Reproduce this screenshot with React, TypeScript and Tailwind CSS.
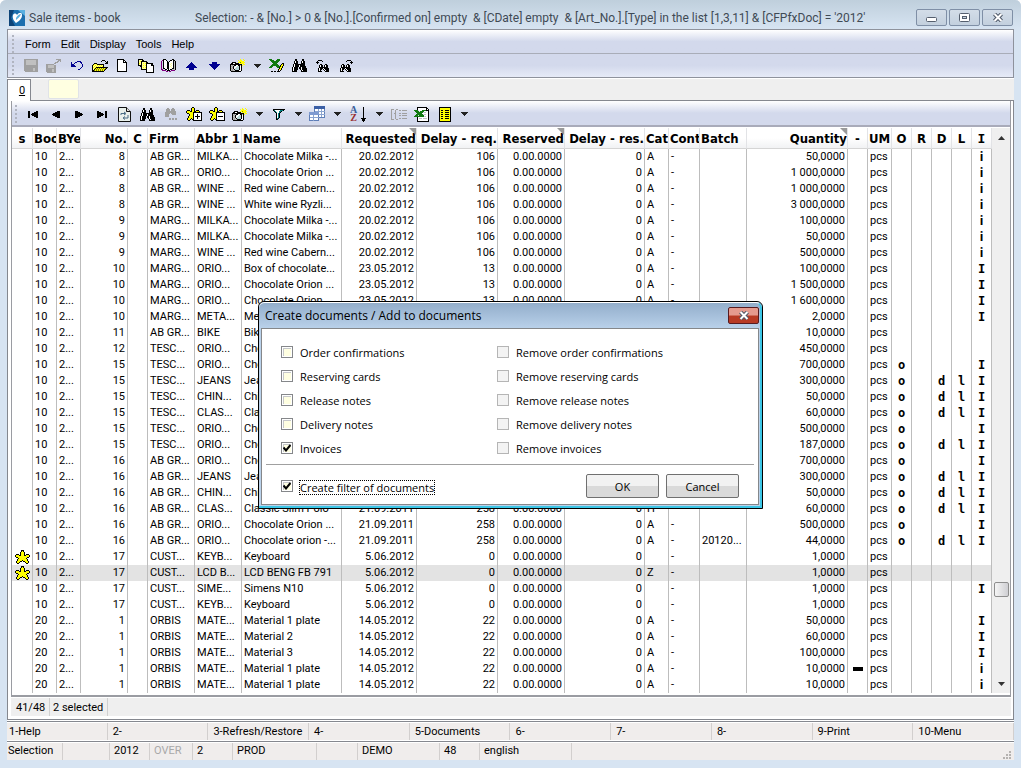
import { ReactNode, useState } from "react";

const uiFont = "font-['Roboto','Noto_Sans',sans-serif]";
const segoe = "font-['Open_Sans','Noto_Sans',sans-serif]";

const palette: Record<string, string> = {
  "#": "#000000",
  y: "#ffff00",
  w: "#ffffff",
  g: "#a0a0a0",
  b: "#000090",
  t: "#008080",
  c: "#b8d8d8",
  p: "#800080",
  e: "#107a10",
  o: "#808000",
  l: "#ffff99",
  s: "#c0c0c0",
};

function Pixels({ rows }: { rows: string[] }) {
  return (
    <svg
      width={rows[0].length}
      height={rows.length}
      viewBox={`0 0 ${rows[0].length} ${rows.length}`}
      shapeRendering="crispEdges"
      className="shrink-0"
      aria-hidden="true"
    >
      {rows.map((row, y) =>
        row.split("").map((ch, x) =>
          palette[ch] ? <rect key={`${x}-${y}`} x={x} y={y} width="1" height="1" fill={palette[ch]} /> : null
        )
      )}
    </svg>
  );
}

const star = [
  "......###......",
  "......#y#......",
  ".....#yyy#.....",
  ".....#yyy#.....",
  ".###.#yyy#.###.",
  "#yyy##yyy##yyy#",
  "#yyyyyyyyyyyyy#",
  ".##yyyyyyyyy##.",
  "...#yyyyyyy#...",
  "..#yyyyyyyyy#..",
  "..#yyyy#yyyy#..",
  ".#yyy##.##yyy#.",
  ".#yy#.....#yy#.",
  "..##.......##..",
];

const starPlus = [
  "......##........",
  ".....#yy#.......",
  ".....#yy#.......",
  ".###.#yy#.###...",
  "#yyy##yy##yyy#..",
  "#yyyyyy#########",
  ".##yyyy#wwwwwww#",
  "...#yyy#www#www#",
  "...#yyy#www#www#",
  "..#yyyy#w#####w#",
  "..#yyyy#www#www#",
  ".#yyy#y#www#www#",
  ".#yy#.##wwwwwww#",
  "..##...#########",
];

const starMinus = starPlus.map((row, i) =>
  i === 7 || i === 8 || i === 10 || i === 11 ? row.slice(0, 8) + "wwwwwww#" : row
);

const save = [
  "gggggggggggggg",
  "ggssssssssssgg",
  "ggssssssssssgg",
  "ggssssssssssgg",
  "ggssssssssssgg",
  "ggssssssssssgg",
  "gggggggggggggg",
  "gggggggggggggg",
  "gggggggggggggg",
  "gggggggggssggg",
  "gggggggggssggg",
  "gggggggggssggg",
  ".ggggggggggggg",
];

const saveAs = [
  "..........ggggg",
  "............ggg",
  "...........gg.g",
  ".........ggg...",
  "........gg.....",
  "gggggggg.......",
  "ggssssssgg.....",
  "ggssssssgg.....",
  "ggssssssgg.....",
  "gggggggggg.....",
  "ggggggssgg.....",
  "ggggggssgg.....",
  "ggggggssgg.....",
  ".ggggggggg.....",
];

const undo = [
  "......bbbb..",
  "b...bb...bb.",
  "b..b......b.",
  "bbb........b",
  "bbbb.......b",
  "bbbbb......b",
  "..........b.",
  ".........b..",
  ".......bb...",
];

const folder = [
  "..........###...",
  ".........#...#.#",
  "..............##",
  "..###........###",
  ".#yly#######....",
  "#ylylylylyl#....",
  "#lylylylyly#....",
  "#yly############",
  "#ly#yoyoyoyoyo#.",
  "#l#yoyoyoyoyo#..",
  "##oyoyoyoyoy#...",
  "############....",
];

const page = [
  "#######....",
  "#wwwww##...",
  "#wwwww#w#..",
  "#wwwww####.",
  "#wwwwwwww#.",
  "#wwwwwwww#.",
  "#wwwwwwww#.",
  "#wwwwwwww#.",
  "#wwwwwwww#.",
  "#wwwwwwww#.",
  "#wwwwwwww#.",
  "#wwwwwwww#.",
  "##########.",
];

const pages = [
  "#####..........",
  "#lll##.........",
  "#ly######......",
  "#ll#llll##.....",
  "#yl#lyly#######",
  "#ll#llll#wwww##",
  "####lyly#wwww###",
  "..##llll#wwwwww#",
  "...#lyly#wwwwww#",
  "...#llll#wwwwww#",
  "...######wwwwww#",
  "........#wwwwww#",
  "........#wwwwww#",
  "........########",
].map((row) => row.padEnd(16, "."));

const book = [
  "..###......##..",
  ".p#ww#...##w##.",
  "p.#www#.#www#s#",
  "p.#www##wwww#s#",
  "p.#www##wwlw#s#",
  "p.#www##wlww#s#",
  "p.#www##wwlw#s#",
  "p.#www##wlww#s#",
  "p.#www##wwlw#s#",
  "p.##ww##www##s#",
  "pp..##w#w##sss#",
  ".pppp.###.pppp.",
  ".....pp.pp.....",
];

const upArrow = [
  "......b......",
  ".....bbb.....",
  "....bbbbb....",
  "...bbbbbbb...",
  "..bbbbbbbbb..",
  ".bbbbbbbbbbb.",
  "....bbbbb....",
  "....bbbbb....",
];

const camera = [
  "..........y..y.",
  "........y.yy..y",
  ".........yyyyy.",
  "..####..yyoyyyy",
  ".##ww####.yyyy.",
  "############.yy",
  "#sgs##ww##s#y..",
  "#gs#cwwcc#w#...",
  "#sg#wwccc#w#...",
  "#gs#wcccc#w#...",
  "#sgs#cccc#w#...",
  "#ggss####ww#...",
  ".##########....",
];

const binoculars = [
  "...##.....##...",
  "...##.....##...",
  "..#w##...#w##..",
  "..#w##...#w##..",
  "..####...####..",
  ".#w##########..",
  ".#w####w#####..",
  ".#w####w######.",
  "#w####.##w####.",
  "#w####.##w#####",
  "#w####..#w#####",
  "#w###....#w####",
  "#####....######",
];

const binocularsGray = [
  "...gg...gg...",
  "..gggg.gggg..",
  "..gggg.gggg..",
  "..gggggggggg.",
  ".ggggggggggg.",
  ".ggggg.ggggg.",
  ".gggg...gggg.",
  ".gggg........",
  ".gggg........",
  ".............",
  ".....gg.gg.gg",
  ".....gg.gg.gg",
];

const binocularsBack = [
  "..####........",
  ".#....#.......",
  "###...........",
  ".#............",
  "....##...##...",
  "...#w##.#w##..",
  "...#w##.#w##..",
  "...#########..",
  "..#w###w#####.",
  "..#w##.#w####.",
  "..#w#...#w###.",
  "..####...####.",
];

const binocularsNext = [
  "........####..",
  ".......#....#.",
  "...........###",
  "............#.",
  "...##...##....",
  "..#w##.#w##...",
  "..#w##.#w##...",
  "..#########...",
  ".#w###w#####..",
  ".#w##.#w####..",
  ".#w#...#w###..",
  ".####...####..",
];

const excelEdit = [
  "eee.....eee....",
  ".eeee..eeee....",
  "..eeeeeeee.....",
  "...eeeeee......",
  "....eeee.....##",
  "...eeeeee...#y#",
  "..eeeeeeee.#yy#",
  ".eee...eeee#y#.",
  "eee.....ee#yy#.",
  "..........#y#..",
  ".........#yy#..",
  ".........#w#...",
  "..##.##.###....",
];

const excelSheet = [
  "...##########...",
  "...#wwwwwwww##..",
  "...#wwwwwwww#w#.",
  "eeee.wwweeee###.",
  ".eeee.eeeeww.w#.",
  "..eeeeeee.ssww#.",
  "...eeeeewwwwww#.",
  "..eeeeeee.ssww#.",
  ".eee.eeeeewwww#.",
  "eeeeeeeeee.sww#.",
  "...#wwwwwwwwww#.",
  "...#wssswssssw#.",
  "...#wwwwwwwwww#.",
  "...#wwwwwwwwww#.",
  "...############.",
];

const yellowList = [
  "############",
  "#yyyyyyyyyy#",
  "#yyyyyyyyyy#",
  "#y##yy####y#",
  "#yyyyyyyyyy#",
  "#y##yy####y#",
  "#yyyyyyyyyy#",
  "#y##yy####y#",
  "#yyyyyyyyyy#",
  "#y##yy####y#",
  "#yyyyyyyyyy#",
  "#y##yy####y#",
  "#yyyyyyyyyy#",
  "#yyyyyyyyyy#",
  "############",
];

const funnel = [
  "############",
  "#twwwwwttt#.",
  ".#twwwtt#...",
  "..#twwt#....",
  "...#wt#.....",
  "...#wt#.....",
  "...#wt#.....",
  "...#wt#.....",
  "...#wt#.....",
  "...#t#......",
  "...##.......",
];

const listBraces = [
  "ggg..gg.........",
  "g...g...gg.ggggg",
  "g...g...........",
  "g...g...........",
  "g..gg...gg.ggggg",
  "g...g...........",
  "g...g...gg.ggggg",
  "g...g...........",
  "g...g...........",
  "g...g...gg.ggggg",
  "ggg..gg.........",
];

const refresh = (
  <svg width="13" height="15" viewBox="0 0 13 15" aria-hidden="true">
    <path d="M.5.5h8l4 4v10H.5z" fill="#e9f0ec" stroke="#111" />
    <path d="M8.5.5v4h4" fill="#ddd" stroke="#111" />
    <path d="M3 8V6.500h4M6 5l2 1.500L6 8M10 8v3H6M7 9.500 5 11l2 1.500" fill="none" stroke="#4a6d86" />
  </svg>
);

const tableIcon = (
  <svg width="17" height="16" viewBox="0 0 17 16" shapeRendering="crispEdges" aria-hidden="true">
    <path d="M5.500.5h10v11h-10z" fill="#fff" stroke="#5f7fb8" />
    <path d="M5 0h11v3H5z" fill="#3b5fa5" />
    <path d="M5.500 5.500h10M5.500 8.500h10M9.500 3v8M12.500 3v8" stroke="#8aa4d0" />
    <path d="M.5 6.500h9v8h-9z" fill="#fff" stroke="#5f7fb8" />
    <path d="M0 6h10v3H0z" fill="#7f9bd0" />
    <path d="M.5 11.500h9M4.500 9v6" stroke="#8aa4d0" />
  </svg>
);

const sortIcon = (
  <span className="flex items-center gap-1" aria-hidden="true">
    <span className="flex flex-col font-['Liberation_Serif',serif] text-[10px] font-bold leading-2">
      <span className="text-[#3a5f9a]">A</span>
      <span className="text-[#9a3030]">Z</span>
    </span>
    <svg width="5" height="15" viewBox="0 0 5 15" shapeRendering="crispEdges">
      <path d="M2 0h1v15H2zM0 11h5v1H0zM1 12h3v2H1z" />
    </svg>
  </span>
);

const tri = (d: string) => (
  <svg width="10" height="9" viewBox="0 0 10 9" shapeRendering="crispEdges" aria-hidden="true">
    <path d={d} />
  </svg>
);

interface ToolItem {
  label: string;
  icon?: ReactNode;
  wide?: boolean;
}

const mainTools: ToolItem[] = [
  { label: "Save", icon: <Pixels rows={save} /> },
  { label: "Save as", icon: <Pixels rows={saveAs} /> },
  { label: "Undo", icon: <Pixels rows={undo} /> },
  { label: "Open", icon: <Pixels rows={folder} /> },
  { label: "New", icon: <Pixels rows={page} /> },
  { label: "Copy", icon: <Pixels rows={pages} /> },
  { label: "Book", icon: <Pixels rows={book} /> },
  { label: "Previous record", icon: <Pixels rows={upArrow} /> },
  { label: "Next record", icon: <Pixels rows={[...upArrow].reverse()} /> },
  { label: "Snapshot", icon: <Pixels rows={camera} /> },
  { label: "Snapshot options" },
  { label: "Edit in Excel", icon: <Pixels rows={excelEdit} /> },
  { label: "Find", icon: <Pixels rows={binoculars} /> },
  { label: "Find previous", icon: <Pixels rows={binocularsBack} /> },
  { label: "Find next", icon: <Pixels rows={binocularsNext} /> },
];

const gridTools: ToolItem[] = [
  { label: "First", icon: tri("M0 1h2v7H0zM3 4h1v1H3zM4 3h2v3H4zM6 2h2v5H6zM8 1h2v7H8z") },
  { label: "Previous", icon: tri("M1 4h1v1H1zM2 3h2v3H2zM4 2h2v5H4zM6 1h3v7H6z") },
  { label: "Next", icon: tri("M8 4h1v1H8zM6 3h2v3H6zM4 2h2v5H4zM1 1h3v7H1z") },
  { label: "Last", icon: tri("M8 1h2v7H8zM6 4h1v1H6zM4 3h2v3H4zM2 2h2v5H2zM0 1h2v7H0z") },
  { label: "Refresh", icon: refresh },
  { label: "Find", icon: <Pixels rows={binoculars} /> },
  { label: "Find more", icon: <Pixels rows={binocularsGray} /> },
  { label: "Select", icon: <Pixels rows={starPlus} /> },
  { label: "Deselect", icon: <Pixels rows={starMinus} /> },
  { label: "Snapshot", icon: <Pixels rows={camera} /> },
  { label: "Snapshot options" },
  { label: "Filter", icon: <Pixels rows={funnel} /> },
  { label: "Filter options" },
  { label: "Columns", icon: tableIcon },
  { label: "Column options" },
  { label: "Sort", icon: sortIcon, wide: true },
  { label: "Sort options" },
  { label: "Group", icon: <Pixels rows={listBraces} /> },
  { label: "Export to Excel", icon: <Pixels rows={excelSheet} /> },
  { label: "Report", icon: <Pixels rows={yellowList} /> },
  { label: "Report options" },
];

function Grip() {
  return (
    <svg width="3" height="18" viewBox="0 0 3 18" shapeRendering="crispEdges" className="shrink-0" aria-hidden="true">
      {[0, 4, 8, 12, 16].map((y) => (
        <rect key={y} x="0" y={y} width="2" height="2" fill="#b0b4c0" />
      ))}
    </svg>
  );
}

function ToolBar({ items }: { items: ToolItem[] }) {
  return (
    <>
      {items.map((item) => (
        <button
          key={item.label}
          type="button"
          aria-label={item.label}
          className={`flex h-full shrink-0 items-center justify-center ${
            item.icon ? (item.wide ? "w-[26px]" : "w-[23px]") : "w-4"
          }`}
        >
          {item.icon || (
            <svg width="7" height="4" viewBox="0 0 7 4" shapeRendering="crispEdges" aria-hidden="true">
              <path d="M0 0h7v1H0zM1 1h5v1H1zM2 2h3v1H2zM3 3h1v1H3z" fill="#222" />
            </svg>
          )}
        </button>
      ))}
    </>
  );
}

interface Column {
  title: string;
  width: number;
  align?: "right" | "center";
  marker?: boolean;
  mono?: boolean;
}

const columns: Column[] = [
  { title: "s", width: 21, align: "center" },
  { title: "Book", width: 24 },
  { title: "BYear", width: 24 },
  { title: "No.", width: 47, align: "right" },
  { title: "C", width: 20, align: "center" },
  { title: "Firm", width: 47 },
  { title: "Abbr 1", width: 47 },
  { title: "Name", width: 100 },
  { title: "Requested", width: 75, align: "right", marker: true },
  { title: "Delay - req.", width: 81, align: "right" },
  { title: "Reserved", width: 67, align: "right", marker: true },
  { title: "Delay - res.", width: 80, align: "right" },
  { title: "Cat", width: 24 },
  { title: "Cont", width: 31 },
  { title: "Batch", width: 47 },
  { title: "Quantity", width: 101, align: "right", marker: true },
  { title: "-", width: 20, align: "center" },
  { title: "UM", width: 24 },
  { title: "O", width: 20, align: "center", mono: true },
  { title: "R", width: 20, align: "center", mono: true },
  { title: "D", width: 20, align: "center", mono: true },
  { title: "L", width: 20, align: "center", mono: true },
  { title: "I", width: 20, align: "center", mono: true },
];

// book, no, firm, abbr, name, requested, delay, cat, batch, quantity, flags (o, d, l, i)
type Item = [string, string, string, string, string, string, string, string, string, string, string];

const items: Item[] = [
  ["10", "8", "AB GR...", "MILKA...", "Chocolate Milka -...", "20.02.2012", "106", "A", "", "50,0000", "i"],
  ["10", "8", "AB GR...", "ORIO...", "Chocolate Orion ...", "20.02.2012", "106", "A", "", "1 000,0000", "i"],
  ["10", "8", "AB GR...", "WINE ...", "Red wine Cabern...", "20.02.2012", "106", "A", "", "1 000,0000", "i"],
  ["10", "8", "AB GR...", "WINE ...", "White wine Ryzli...", "20.02.2012", "106", "A", "", "3 000,0000", "i"],
  ["10", "9", "MARG...", "MILKA...", "Chocolate Milka -...", "20.02.2012", "106", "A", "", "100,0000", "i"],
  ["10", "9", "MARG...", "MILKA...", "Chocolate Milka -...", "20.02.2012", "106", "A", "", "50,0000", "i"],
  ["10", "9", "MARG...", "WINE ...", "Red wine Cabern...", "20.02.2012", "106", "A", "", "500,0000", "i"],
  ["10", "10", "MARG...", "ORIO...", "Box of chocolate...", "23.05.2012", "13", "A", "", "100,0000", "I"],
  ["10", "10", "MARG...", "ORIO...", "Chocolate Orion ...", "23.05.2012", "13", "A", "", "1 500,0000", "I"],
  ["10", "10", "MARG...", "ORIO...", "Chocolate Orion", "23.05.2012", "13", "A", "", "1 600,0000", "I"],
  ["10", "10", "MARG...", "META...", "Metal", "23.05.2012", "13", "A", "", "2,0000", "I"],
  ["10", "11", "AB GR...", "BIKE", "Bike", "23.05.2012", "13", "A", "", "10,0000", ""],
  ["10", "12", "TESC...", "ORIO...", "Chocolate Orion ...", "23.05.2012", "13", "A", "", "450,0000", ""],
  ["10", "15", "TESC...", "ORIO...", "Chocolate Orion ...", "21.09.2011", "258", "A", "", "700,0000", "oI"],
  ["10", "15", "TESC...", "JEANS", "Jeans", "21.09.2011", "258", "A", "", "300,0000", "odlI"],
  ["10", "15", "TESC...", "CHIN...", "Chinos", "21.09.2011", "258", "A", "", "50,0000", "odlI"],
  ["10", "15", "TESC...", "CLAS...", "Classic Slim Polo", "21.09.2011", "258", "A", "", "60,0000", "odlI"],
  ["10", "15", "TESC...", "ORIO...", "Chocolate Orion ...", "21.09.2011", "258", "A", "", "500,0000", "oI"],
  ["10", "15", "TESC...", "ORIO...", "Chocolate Orion ...", "21.09.2011", "258", "A", "", "187,0000", "odlI"],
  ["10", "16", "AB GR...", "ORIO...", "Chocolate Orion ...", "21.09.2011", "258", "A", "", "700,0000", "oI"],
  ["10", "16", "AB GR...", "JEANS", "Jeans", "21.09.2011", "258", "A", "", "300,0000", "odlI"],
  ["10", "16", "AB GR...", "CHIN...", "Chinos", "21.09.2011", "258", "A", "", "50,0000", "odlI"],
  ["10", "16", "AB GR...", "CLAS...", "Classic Slim Polo", "21.09.2011", "258", "H", "", "60,0000", "odlI"],
  ["10", "16", "AB GR...", "ORIO...", "Chocolate Orion ...", "21.09.2011", "258", "A", "", "500,0000", "oI"],
  ["10", "16", "AB GR...", "ORIO...", "Chocolate orion -...", "21.09.2011", "258", "A", "20120...", "44,0000", "odlI"],
  ["10", "17", "CUST...", "KEYB...", "Keyboard", "5.06.2012", "0", "", "", "1,0000", "*"],
  ["10", "17", "CUST...", "LCD B...", "LCD BENG FB 791", "5.06.2012", "0", "Z", "", "1,0000", "*"],
  ["10", "17", "CUST...", "SIME...", "Simens N10", "5.06.2012", "0", "", "", "1,0000", "I"],
  ["10", "17", "CUST...", "KEYB...", "Keyboard", "5.06.2012", "0", "", "", "1,0000", ""],
  ["20", "1", "ORBIS", "MATE...", "Material 1 plate", "14.05.2012", "22", "A", "", "50,0000", "I"],
  ["20", "1", "ORBIS", "MATE...", "Material 2", "14.05.2012", "22", "A", "", "60,0000", "I"],
  ["20", "1", "ORBIS", "MATE...", "Material 3", "14.05.2012", "22", "A", "", "100,0000", "I"],
  ["20", "1", "ORBIS", "MATE...", "Material 1 plate", "14.05.2012", "22", "A", "", "10,0000", "-i"],
  ["20", "1", "ORBIS", "MATE...", "Material 1 plate", "14.05.2012", "22", "A", "", "10,0000", "i"],
];

const currentRow = 26;

function rowCells(item: Item): ReactNode[] {
  const [book, no, firm, abbr, name, requested, delay, cat, batch, quantity, flags] = item;
  const flag = (f: string) => (flags.includes(f) ? f : "");
  return [
    flags.includes("*") ? <Pixels rows={star} /> : "",
    book,
    "2...",
    no,
    "",
    firm,
    abbr,
    name,
    requested,
    delay,
    "0.00.0000",
    "0",
    cat,
    "-",
    batch,
    quantity,
    flags.includes("-") ? <span className="block h-1 w-2.5 bg-black" /> : "",
    "pcs",
    flag("o"),
    "",
    flag("d"),
    flag("l"),
    flags.includes("i") ? <span className="font-['Noto_Sans',sans-serif]">i</span> : flag("I"),
  ];
}

function ItemTable() {
  return (
    <table className="w-full table-fixed border-separate border-spacing-0">
      <colgroup>
        {columns.map((col, i) => (
          <col key={i} style={{ width: col.width }} />
        ))}
      </colgroup>
      <thead>
        <tr>
          {columns.map((col, i) => (
            <th
              key={i}
              className="border-b border-r border-b-[#d5d5d5] border-r-[#e2e3e6] bg-linear-to-b from-white from-50% to-[#f1f2f4] p-0"
            >
              <div
                className={`relative flex h-5 items-center overflow-hidden whitespace-nowrap pt-px font-['DejaVu_Sans_Condensed','DejaVu_Sans',sans-serif] text-[13px] leading-4 ${
                  col.align === "right" ? "justify-end" : col.align === "center" ? "justify-center" : "pl-px"
                }`}
              >
                {col.title === "I" ? <span className="font-['DejaVu_Sans_Mono',monospace]">I</span> : col.title}
                {col.marker && (
                  <svg width="7" height="7" viewBox="0 0 7 7" className="absolute right-0 top-0" aria-hidden="true">
                    <path d="M0 0h7v7z" fill="#9a9a9a" />
                  </svg>
                )}
              </div>
            </th>
          ))}
        </tr>
      </thead>
      <tbody>
        {items.map((item, r) => (
          <tr key={r} className={r === currentRow ? "bg-[#e3e3e3]" : ""}>
            {rowCells(item).map((cell, c) => {
              const col = columns[c];
              return (
                <td key={c} className="border-r border-[#bdbdbd] p-0">
                  <div
                    className={`flex h-4 items-center overflow-hidden whitespace-nowrap leading-4 ${
                      col.align === "right" ? "justify-end pr-0.5" : col.align === "center" ? "justify-center" : "pl-0.5"
                    } ${col.mono ? "font-['DejaVu_Sans_Mono',monospace] text-[12px] font-bold" : ""}`}
                  >
                    {cell}
                  </div>
                </td>
              );
            })}
          </tr>
        ))}
      </tbody>
    </table>
  );
}

function ScrollBar() {
  return (
    <div className="flex w-[18px] shrink-0 flex-col items-center bg-[#efefef]">
      <button type="button" aria-label="Scroll up" className="flex h-[19px] w-full items-center justify-center">
        <svg width="7" height="4" viewBox="0 0 7 4" aria-hidden="true">
          <path d="M3.500 0 7 4H0z" fill="#333" />
        </svg>
      </button>
      <div className="grow-[436]" />
      <button
        type="button"
        aria-label="Scroll position"
        className="h-[15px] w-[15px] rounded-xs border border-[#8e8e8e] bg-linear-to-r from-[#f5f5f5] to-[#cfcfd3]"
      />
      <div className="grow-[78]" />
      <button type="button" aria-label="Scroll down" className="flex h-[18px] w-full items-center justify-center">
        <svg width="7" height="4" viewBox="0 0 7 4" aria-hidden="true">
          <path d="M0 0h7L3.500 4z" fill="#333" />
        </svg>
      </button>
    </div>
  );
}

interface CheckRowProps {
  label: string;
  checked?: boolean;
  disabled?: boolean;
  focused?: boolean;
}

function CheckRow({ label, checked, disabled, focused }: CheckRowProps) {
  const [on, setOn] = useState(!!checked);
  return (
    <label className="flex h-6 items-center gap-[7px]">
      <span className="relative h-3 w-3 shrink-0">
        <input
          type="checkbox"
          checked={on}
          disabled={disabled}
          onChange={() => setOn(!on)}
          className={`block h-3 w-3 appearance-none border ${
            disabled
              ? "border-[#b5b5b5] bg-[#f3f3f3]"
              : "border-[#85878a] bg-[#ffffe1] shadow-[inset_0_0_0_1px_#ffffff,inset_2px_2px_0_0_#c5c7ca]"
          }`}
        />
        {on && (
          <svg width="8" height="8" viewBox="0 0 8 8" className="pointer-events-none absolute left-0.5 top-0.5" aria-hidden="true">
            <path d="M.5 3.500 3 6.500 7.500 1" fill="none" stroke="#000" strokeWidth="2" />
          </svg>
        )}
      </span>
      <span className="pt-0.5">
        <span className={focused ? "block leading-[13px] outline-1 outline-dotted outline-black" : "block leading-4"}>{label}</span>
      </span>
    </label>
  );
}

const dialogButton =
  "h-6 w-[73px] rounded-xs border border-[#707070] bg-linear-to-b from-[#f2f2f2] from-50% to-[#dadada] to-50% pt-px text-center";

function DocumentsDialog() {
  return (
    <div
      role="dialog"
      aria-label="Create documents / Add to documents"
      className={`absolute inset-x-0 top-[301px] mx-auto w-[505px] rounded-t-md border border-black bg-[#b9d1ea] text-[11px] ${segoe}`}
    >
      <div className="rounded-t-md border-b-2 border-r-2 border-t border-[#3cc6e6] border-t-white bg-linear-to-b from-[#93aecb] to-[#bad2eb] to-[26px] pb-px pl-0.5 pr-px">
        <div className="flex h-[25px] items-center justify-between pl-1">
          <span>
            <span className="text-[12px]">Create documents / Add to documents</span>
          </span>
          <button
            type="button"
            aria-label="Close"
            className="flex h-[17px] w-[31px] items-center justify-center rounded-xs border border-[#571b20] bg-linear-to-b from-[#e59a8e] from-45% to-[#b83a24] to-55%"
          >
            <CloseGlyph />
          </button>
        </div>
        <div className="border border-[#85878a] bg-white">
          <div className="grid grid-cols-[216px_1fr] px-[19px] pb-1 pt-[11px]">
            <div>
              <CheckRow label="Order confirmations" />
              <CheckRow label="Reserving cards" />
              <CheckRow label="Release notes" />
              <CheckRow label="Delivery notes" />
              <CheckRow label="Invoices" checked />
            </div>
            <div>
              <CheckRow label="Remove order confirmations" disabled />
              <CheckRow label="Remove reserving cards" disabled />
              <CheckRow label="Remove release notes" disabled />
              <CheckRow label="Remove delivery notes" disabled />
              <CheckRow label="Remove invoices" disabled />
            </div>
          </div>
          <div className="mx-1 border-t border-[#a0a0a0]" />
          <div className="flex items-center justify-between px-[19px] pb-1.5 pt-[9px]">
            <CheckRow label="Create filter of documents" checked focused />
            <div className="flex gap-[7px]">
              <button type="button" className={dialogButton}>OK</button>
              <button type="button" className={dialogButton}>Cancel</button>
            </div>
          </div>
        </div>
      </div>
    </div>
  );
}

function CloseGlyph() {
  return (
    <svg width="12" height="9" viewBox="0 0 12 9" aria-hidden="true">
      <path d="M2.500 1 9.500 8M9.500 1 2.500 8" stroke="#4d5766" strokeWidth="4" />
      <path d="M2.500 1 9.500 8M9.500 1 2.500 8" stroke="#fff" strokeWidth="2" />
    </svg>
  );
}

const captionButton =
  "flex h-[17px] w-[31px] items-center justify-center rounded-xs border border-[#7f8fa6] bg-linear-to-b from-[#d3dde8] to-[#c3d0de]";

function TitleBar() {
  return (
    <header className={`flex h-[29px] items-center bg-linear-to-b from-[#bfcfdc] to-[#d7e4f2] pl-[9px] pr-[8px] pt-1.5 text-[12px] text-[#3f4a55] ${uiFont}`}>
      <svg width="16" height="16" viewBox="0 0 16 16" className="shrink-0" aria-hidden="true">
        <rect width="16" height="16" fill="#1c6fae" />
        <path d="M0 0h5l-3 8 4 8H0z" fill="#0d4478" />
        <path d="M9 0h7v6z" fill="#59b0e0" />
        <path d="M4 5c1-2 3-2 4 0 2-3 5-3 5 0 0 4-3 6-6 8C5 11 3 8 4 5z" fill="#fff" />
        <path d="M7 8c1-2 3-4 5-4-1 3-3 4-5 6z" fill="#5fb2e0" />
      </svg>
      <span className="w-[170px] shrink-0 pl-1">Sale items - book</span>
      <span className="grow whitespace-pre">
        {"Selection: - & [No.] > 0 & [No.].[Confirmed on] empty  & [CDate] empty  & [Art_No.].[Type] in the list [1,3,11] & [CFPfxDoc] = '2012'"}
      </span>
      <span className="flex gap-0.5">
        <button type="button" aria-label="Minimize" className={captionButton}>
          <svg width="11" height="9" viewBox="0 0 11 9" aria-hidden="true">
            <rect x=".5" y="4.500" width="10" height="4" rx="1" fill="#fff" stroke="#555f6e" />
          </svg>
        </button>
        <button type="button" aria-label="Restore" className={captionButton}>
          <svg width="11" height="9" viewBox="0 0 11 9" aria-hidden="true">
            <rect x=".5" y=".5" width="10" height="8" rx="1" fill="#fff" stroke="#555f6e" />
            <rect x="3.500" y="3.500" width="4" height="2" fill="#c8d4e0" stroke="#555f6e" />
          </svg>
        </button>
        <button type="button" aria-label="Close window" className={captionButton}>
          <CloseGlyph />
        </button>
      </span>
    </header>
  );
}

const functionKeys = ["1-Help", "2-", "3-Refresh/Restore", "4-", "5-Documents", "6-", "7-", "8-", "9-Print", "10-Menu"];

export default function App() {
  return (
    <div className={`relative overflow-hidden rounded-t-md border-b border-[#4a4a4a] bg-[#d7e4f2] text-[11px] leading-4 text-black ${uiFont}`}>
      <TitleBar />
      <main className="mx-[7px] mb-2 bg-white">
        <div className="border border-[#8e929c]">
          <nav className="flex h-6 items-center border-b border-[#a9adb8] bg-linear-to-b from-white to-[#d3d9ec] to-50% pl-1 pt-1 font-['Liberation_Sans',Arial,sans-serif] text-[11px]">
            <Grip />
            <div className="flex gap-2.5 pl-2.5">
              {["Form", "Edit", "Display", "Tools", "Help"].map((menu) => (
                <button key={menu} type="button">{menu}</button>
              ))}
            </div>
          </nav>
          <div className="flex h-[23px] items-center bg-linear-to-b from-[#d3d9ec] from-50% to-[#e6eaf7] pl-1">
            <Grip />
            <div className="flex h-full pl-1">
              <ToolBar items={mainTools} />
            </div>
          </div>
        </div>

        <div className="mt-px flex h-[22px] border-b border-l border-b-[#85888f] border-l-[#85888f] bg-[#efefef]">
          <button type="button" className="-mb-px h-[22px] w-[23px] border-r border-t border-[#85888f] bg-white pl-1.5 underline">
            0
          </button>
          <input aria-label="Quick search" className="ml-[17px] h-5 w-[31px] rounded-xs border border-[#e0e3e8] bg-[#ffffe1]" />
        </div>

        <div className="border-x border-b border-[#85888f] pb-[3px] pl-[3px] pr-[2px]">
          <div className="border-x border-b-2 border-[#9a9ca2]">
            <div className="flex h-[26px] items-center border-b-2 border-[#a9abba] bg-linear-to-b from-white to-[#d3d9ec] to-50% pl-[3px] pt-0.5">
              <Grip />
              <div className="flex h-full pl-[3px]">
                <ToolBar items={gridTools} />
              </div>
            </div>
            <div className="flex pb-0.5 pt-px">
              <div className="min-w-0 grow">
                <ItemTable />
              </div>
              <ScrollBar />
            </div>
          </div>
          <div className="mt-px flex h-[18px] items-center bg-[#efefef]">
            <span className="h-full w-[39px] border-r border-[#d0d0d0] pl-[5px] leading-5">41/48</span>
            <span className="h-full w-[58px] border-r border-[#d0d0d0] pl-[3px] leading-5">2 selected</span>
          </div>
        </div>

        <div className="mt-px border-y border-[#85888f] py-px">
          <div className="grid grid-cols-10 bg-[#f0edec]">
            {functionKeys.map((key, i) => (
              <button
                key={key}
                type="button"
                className={`h-[17px] border-r border-[#d2cfce] text-left ${i ? "pl-[5px]" : "pl-0.5"}`}
              >
                {key}
              </button>
            ))}
          </div>
        </div>

        <footer className="mt-px flex h-[17px] bg-[#f0edec]">
          <span className="w-14 border-r border-[#d2cfce] pl-px">Selection</span>
          <span className="w-[47px] border-r border-[#d2cfce]" />
          <span className="w-10 border-r border-[#d2cfce] pl-1">2012</span>
          <span className="w-[43px] border-r border-[#d2cfce] pl-1 text-[#a8a8a8]">OVER</span>
          <span className="w-10 border-r border-[#d2cfce] pl-1">2</span>
          <span className="w-[84px] border-r border-[#d2cfce] pl-1">PROD</span>
          <span className="w-[41px] border-r border-[#d2cfce]" />
          <span className="w-[82px] border-r border-[#d2cfce] pl-1">DEMO</span>
          <span className="w-10 border-r border-[#d2cfce] pl-1">48</span>
          <span className="w-[92px] border-r border-[#d2cfce] pl-1">english</span>
          <svg width="9" height="9" viewBox="0 0 9 9" shapeRendering="crispEdges" className="ml-auto mr-0.5 self-end" aria-hidden="true">
            <path d="M6 0h2v2H6zM3 3h2v2H3zM6 3h2v2H6zM0 6h2v2H0zM3 6h2v2H3zM6 6h2v2H6z" fill="#b5b2b0" />
          </svg>
        </footer>
      </main>
      <DocumentsDialog />
    </div>
  );
}
